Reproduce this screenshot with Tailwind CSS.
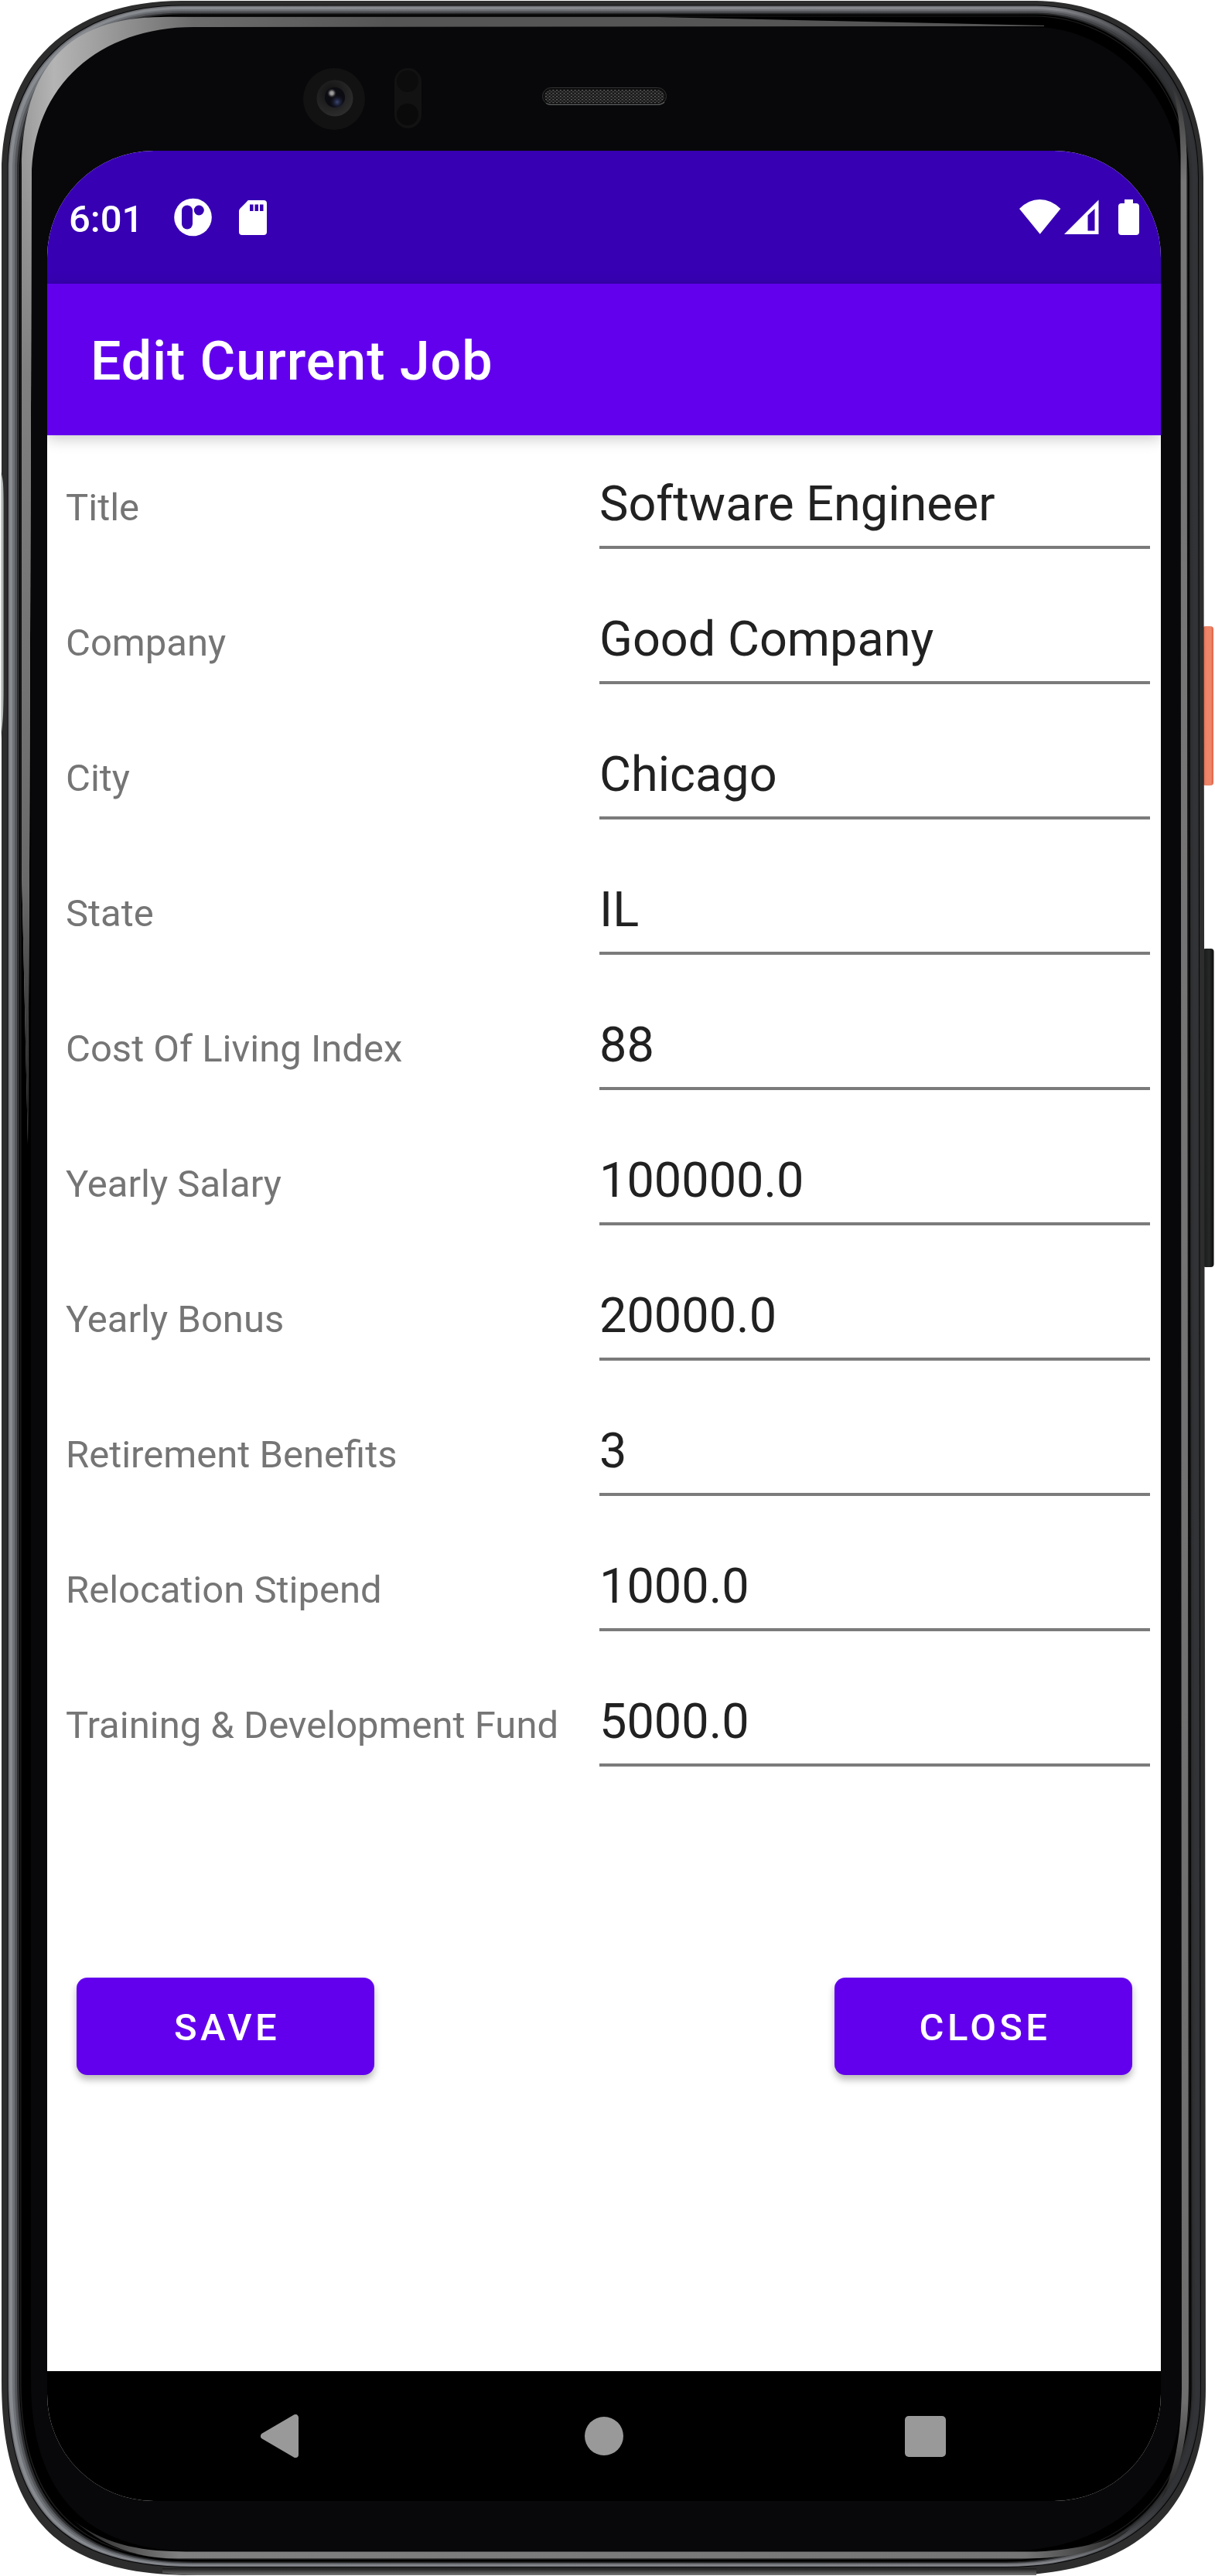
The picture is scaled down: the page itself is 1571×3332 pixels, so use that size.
<!DOCTYPE html>
<html lang="en">
<head>
<meta charset="utf-8">
<title>Edit Current Job</title>
<script src="https://cdn.jsdelivr.net/npm/@tailwindcss/browser@4"></script>
</head>
<body class="bg-white">
<div class="relative w-[1571px] h-[3332px] overflow-hidden pt-[195px] pl-[61px] font-[Roboto,sans-serif]">

  <!-- Phone frame -->
  <svg class="absolute inset-0" width="1571" height="3332" viewBox="0 0 1571 3332">
    <defs>
      <linearGradient id="r1" x1="0" x2="1"><stop offset="0" stop-color="#6d6f74"/><stop offset=".88" stop-color="#6d6f74"/><stop offset=".97" stop-color="#2f3032"/></linearGradient>
      <linearGradient id="r2" x1="0" x2="1"><stop offset="0" stop-color="#888b90"/><stop offset=".88" stop-color="#84868b"/><stop offset=".97" stop-color="#323336"/></linearGradient>
      <linearGradient id="r3" x1="0" x2="1"><stop offset="0" stop-color="#6f7277"/><stop offset=".88" stop-color="#6c6e73"/><stop offset=".97" stop-color="#323336"/></linearGradient>
      <linearGradient id="r4" x1="0" x2="1"><stop offset="0" stop-color="#54565a"/><stop offset=".88" stop-color="#505256"/><stop offset=".97" stop-color="#2f3032"/></linearGradient>
      <linearGradient id="r5" x1="0" x2="1"><stop offset="0" stop-color="#2b2c2e"/><stop offset=".97" stop-color="#242526"/></linearGradient>
      <linearGradient id="hl" gradientUnits="userSpaceOnUse" x1="0" y1="0" x2="500" y2="0"><stop offset="0" stop-color="#8a8a8a"/><stop offset=".14" stop-color="#b4b4b4"/><stop offset=".25" stop-color="#a0a0a0"/><stop offset=".5" stop-color="#6c6c6c"/><stop offset="1" stop-color="#555"/></linearGradient>
      <linearGradient id="hv" gradientUnits="userSpaceOnUse" x1="0" y1="150" x2="0" y2="1480"><stop offset="0" stop-color="#888" stop-opacity="0"/><stop offset=".25" stop-color="#808080"/><stop offset=".75" stop-color="#6a6a6a"/><stop offset="1" stop-color="#111"/></linearGradient>
      <linearGradient id="hr" gradientUnits="userSpaceOnUse" x1="0" y1="110" x2="0" y2="3232"><stop offset="0" stop-color="#333"/><stop offset=".04" stop-color="#777"/><stop offset=".96" stop-color="#6e6e6e"/><stop offset="1" stop-color="#222"/></linearGradient>
      <linearGradient id="hb" gradientUnits="userSpaceOnUse" x1="95" y1="0" x2="1462" y2="0"><stop offset="0" stop-color="#222"/><stop offset=".1" stop-color="#808080"/><stop offset=".9" stop-color="#757575"/><stop offset="1" stop-color="#222"/></linearGradient>
      <linearGradient id="ob" gradientUnits="userSpaceOnUse" x1="0" y1="3321" x2="0" y2="3331"><stop offset="0" stop-color="#111"/><stop offset="1" stop-color="#777"/></linearGradient>
      <linearGradient id="nt" gradientUnits="userSpaceOnUse" x1="0" y1="0" x2="6" y2="0"><stop offset="0" stop-color="#dfe3e1"/><stop offset=".6" stop-color="#a9b0ae"/><stop offset="1" stop-color="#2c3432"/></linearGradient>
      <linearGradient id="pw" x1="0" x2="1"><stop offset="0" stop-color="#d96a4f"/><stop offset=".35" stop-color="#ef8468"/><stop offset=".75" stop-color="#ee8669"/><stop offset="1" stop-color="#e05f42"/></linearGradient>
      <linearGradient id="vol" x1="0" x2="1"><stop offset="0" stop-color="#171818"/><stop offset=".6" stop-color="#262727"/><stop offset="1" stop-color="#0c0c0c"/></linearGradient>
      <radialGradient id="lens" cx=".4" cy=".35" r=".7"><stop offset="0" stop-color="#111"/><stop offset="1" stop-color="#2e2e2f"/></radialGradient>
      <radialGradient id="blue" cx=".5" cy=".5" r=".5"><stop offset="0" stop-color="#3d4a78"/><stop offset="1" stop-color="#0e0e18" stop-opacity="0"/></radialGradient>
      <radialGradient id="glint" cx=".5" cy=".5" r=".5"><stop offset="0" stop-color="#aaa"/><stop offset=".4" stop-color="#8a8a8a"/><stop offset="1" stop-color="#333" stop-opacity="0"/></radialGradient>
      <pattern id="mesh" width="4.7" height="4" patternUnits="userSpaceOnUse"><rect width="4.7" height="4" fill="#161616"/><rect x="0" y="0" width="2" height="1.5" fill="#606060"/><rect x="2.3" y="2" width="2" height="1.5" fill="#505050"/></pattern>
    </defs>
    <rect x="1555" y="810" width="14" height="206" rx="4" fill="url(#pw)"/>
    <rect x="1555" y="1227" width="14.5" height="412" rx="4" fill="url(#vol)"/>
    <g id="frame"></g>
    <path d="M210 3322H1340V3331H260Q230 3331 210 3328Z" fill="url(#ob)"/>
    <path d="M1 610C5 622 5 640 5 660V890C5 920 3 940 1 955Z" fill="url(#nt)"/>
    <path d="M28 1125V220C28 85 90 22 210 22H850L1350 33V34L250 35C130 35 41 110 41 230L38 1125L36 1480Z" fill="url(#hl)"/>
    <path d="M28 1125V150H41L41 230L38 1125L36 1480Z" fill="url(#hv)"/>
    <path d="M1515 110C1524 140 1526 170 1526.500 200L1528 3090C1527 3150 1520 3190 1502 3232C1528 3195 1537 3150 1537 3080L1534.500 200C1533 160 1528 130 1515 110Z" fill="url(#hr)"/>
    <path d="M95 3260C140 3295 190 3300 240 3300.500H1340C1400 3298 1440 3285 1462 3270C1430 3300 1390 3309 1320 3309.500H230C170 3309 130 3290 95 3260Z" fill="url(#hb)"/>
    <!-- Front camera, sensor, speaker -->
    <circle cx="432" cy="128" r="40" fill="#121212"/>
    <circle cx="433" cy="127" r="23.500" fill="url(#lens)"/>
    <circle cx="433" cy="126" r="13" fill="#0b0b12"/>
    <circle cx="436" cy="132" r="10" fill="url(#blue)"/>
    <circle cx="429" cy="120.500" r="6" fill="url(#glint)"/>
    <rect x="510" y="88" width="35" height="78" rx="17.500" fill="#121213"/>
    <circle cx="527" cy="105" r="14" fill="#0c0c0d"/>
    <circle cx="527" cy="148" r="14" fill="#0a0a0b"/>
    <rect x="701.500" y="113.500" width="160" height="22" rx="11" fill="#0c0c0c" stroke="#333434"/>
    <rect x="704" y="116" width="155" height="17.500" rx="8.700" fill="url(#mesh)"/>
    <path d="M706 133.500Q709 135.300 713 135.300H850Q856 135.300 859 132" fill="none" stroke="#5c5e5e" stroke-width="1.200"/>
  </svg>

  <!-- Screen -->
  <div class="relative w-[1440px] h-[3040px] rounded-[138px] overflow-hidden bg-white flex flex-col">
    <header class="h-[172px] shrink-0 bg-[#3700b3] flex items-start text-white">
      <div class="pl-[28px] pt-[60px] text-[49px] leading-[58px] font-medium w-[164px]">6:01</div>
      <svg class="mt-[61px]" width="50" height="50" viewBox="0 0 50 50"><circle cx="24.500" cy="25" r="24.300" fill="#fff"/><rect x="10" y="9.500" width="14" height="31" rx="7" fill="#3700b3"/><circle cx="32.300" cy="16" r="6.500" fill="#3700b3"/></svg>
      <svg class="mt-[64px] ml-[33px]" width="37" height="46" viewBox="0 0 37 46"><path d="M13.500 0H33Q37 0 37 4V41Q37 45 33 45H5Q1 45 1 41V14Q1 12 2.500 10.500L11 2Q12 0 13.500 0Z" fill="#fff"/><path d="M15 5.500H19.500V14H15ZM21.500 5.500H26V14H21.500ZM28 5.500H32.500V14H28Z" fill="#3700b3"/></svg>
      <svg class="mt-[63px] ml-auto" width="54" height="46" viewBox="0 0 54 46"><path d="M0 12Q12 0 26.500 0T53.300 12L26.700 44.700Z" fill="#fff"/></svg>
      <svg class="mt-[63px] ml-[4px]" width="45" height="46" viewBox="0 0 45 46"><path fill-rule="evenodd" d="M0 45L44.500 .5V45ZM30.500 20.500V40.500H39.500V12Z" fill="#fff"/></svg>
      <svg class="mt-[63px] ml-[24px] mr-[28px]" width="28" height="46" viewBox="0 0 28 46"><path d="M9 0H20V5H24Q28 5 28 9V42Q28 46 24 46H5Q1 46 1 42V9Q1 5 5 5H9Z" fill="#fff"/></svg>
    </header>
    <h1 class="relative h-[196px] shrink-0 bg-[#6200ee] shadow-[0_4px_18px_rgba(0,0,0,0.22)] flex items-center pl-[56px] pt-[4px] text-[70px] font-medium leading-[82px] tracking-[0.94px] text-white whitespace-nowrap">Edit Current Job</h1>
    <main class="flex-1 flex flex-col">
      <form id="fields" class="flex flex-col"></form>
      <div class="mt-[245px] pl-[38px] pr-[37px] flex justify-between text-white text-[49px] leading-[58px] font-medium tracking-[4.37px]">
        <button class="w-[385px] h-[126px] pl-[4px] pt-[4px] rounded-[14px] bg-[#6200ee] shadow-[0_6px_10px_rgba(0,0,0,0.28)]">SAVE</button>
        <button class="w-[385px] h-[126px] pl-[4px] pt-[4px] rounded-[14px] bg-[#6200ee] shadow-[0_6px_10px_rgba(0,0,0,0.28)]">CLOSE</button>
      </div>
    </main>
    <nav class="h-[168px] shrink-0 bg-black flex items-center pl-[276px]">
      <svg width="49" height="56" viewBox="0 0 49 56"><path d="M4 28L45 4V52Z" fill="#999" stroke="#999" stroke-width="8" stroke-linejoin="round"/></svg>
      <div class="size-[50px] ml-[370px] rounded-full bg-[#999]"></div>
      <div class="size-[53px] ml-[364px] rounded-[5px] bg-[#999]"></div>
    </nav>
  </div>
</div>
<script>
  // Nested body outlines, from the outer shell inwards: left, top, right, bottom, fill
  const layers = [
    [2, 1, 1556, 3331, '#2c2d2c'], [9.5, 6.5, 1550, 3321, '#08080a'], [10.5, 7.5, 1549, 3320, 'url(#r1)'],
    [12, 9, 1547.5, 3319, 'url(#r2)'], [16, 12, 1545, 3317.5, 'url(#r3)'], [19, 14, 1542, 3316, 'url(#r4)'],
    [22, 16.5, 1539, 3315, 'url(#r5)'], [25, 18.5, 1537.5, 3313.5, '#000'],
    [26, 20.5, 1536, 3311, '#1c1c1d'], [27.5, 21.5, 1535, 3310, '#000'], [40, 35, 1526, 3300, '#08080a']
  ];
  document.getElementById('frame').innerHTML = layers.map(([l, t, r, b, f]) => {
    const q = r + 3;
    return `<path fill="${f}" d="M${l} 225C${l} ${t + 84} ${l + 86} ${t} 235 ${t}H1340C${r - 90} ${t + 2} ${r} ${t + 88} ${r} 230L${q} 3090C${q} ${b - 90} ${q - 85} ${b} 1300 ${b}H250C${l + 75} ${b} ${l} ${b - 71} ${l} 3080Z"/>`;
  }).join('');

  const rows = [['Title', 'Software Engineer'], ['Company', 'Good Company'], ['City', 'Chicago'], ['State', 'IL'],
    ['Cost Of Living Index', '88'], ['Yearly Salary', '100000.0'], ['Yearly Bonus', '20000.0'],
    ['Retirement Benefits', '3'], ['Relocation Stipend', '1000.0'], ['Training &amp; Development Fund', '5000.0']];
  document.getElementById('fields').innerHTML = rows.map(([k, v]) => `
    <div class="h-[175px] flex whitespace-nowrap">
      <label class="w-[714px] shrink-0 pl-[24px] pt-[65px] text-[49px] leading-[58px] text-[#757575]">${k}</label>
      <div class="w-[712px] shrink-0 h-[147px] pt-[52px] border-b-[4px] border-[#7b7b7b] text-[63px] leading-[74px] text-[#212121]">${v}</div>
    </div>`).join('');
</script>
</body>
</html>
